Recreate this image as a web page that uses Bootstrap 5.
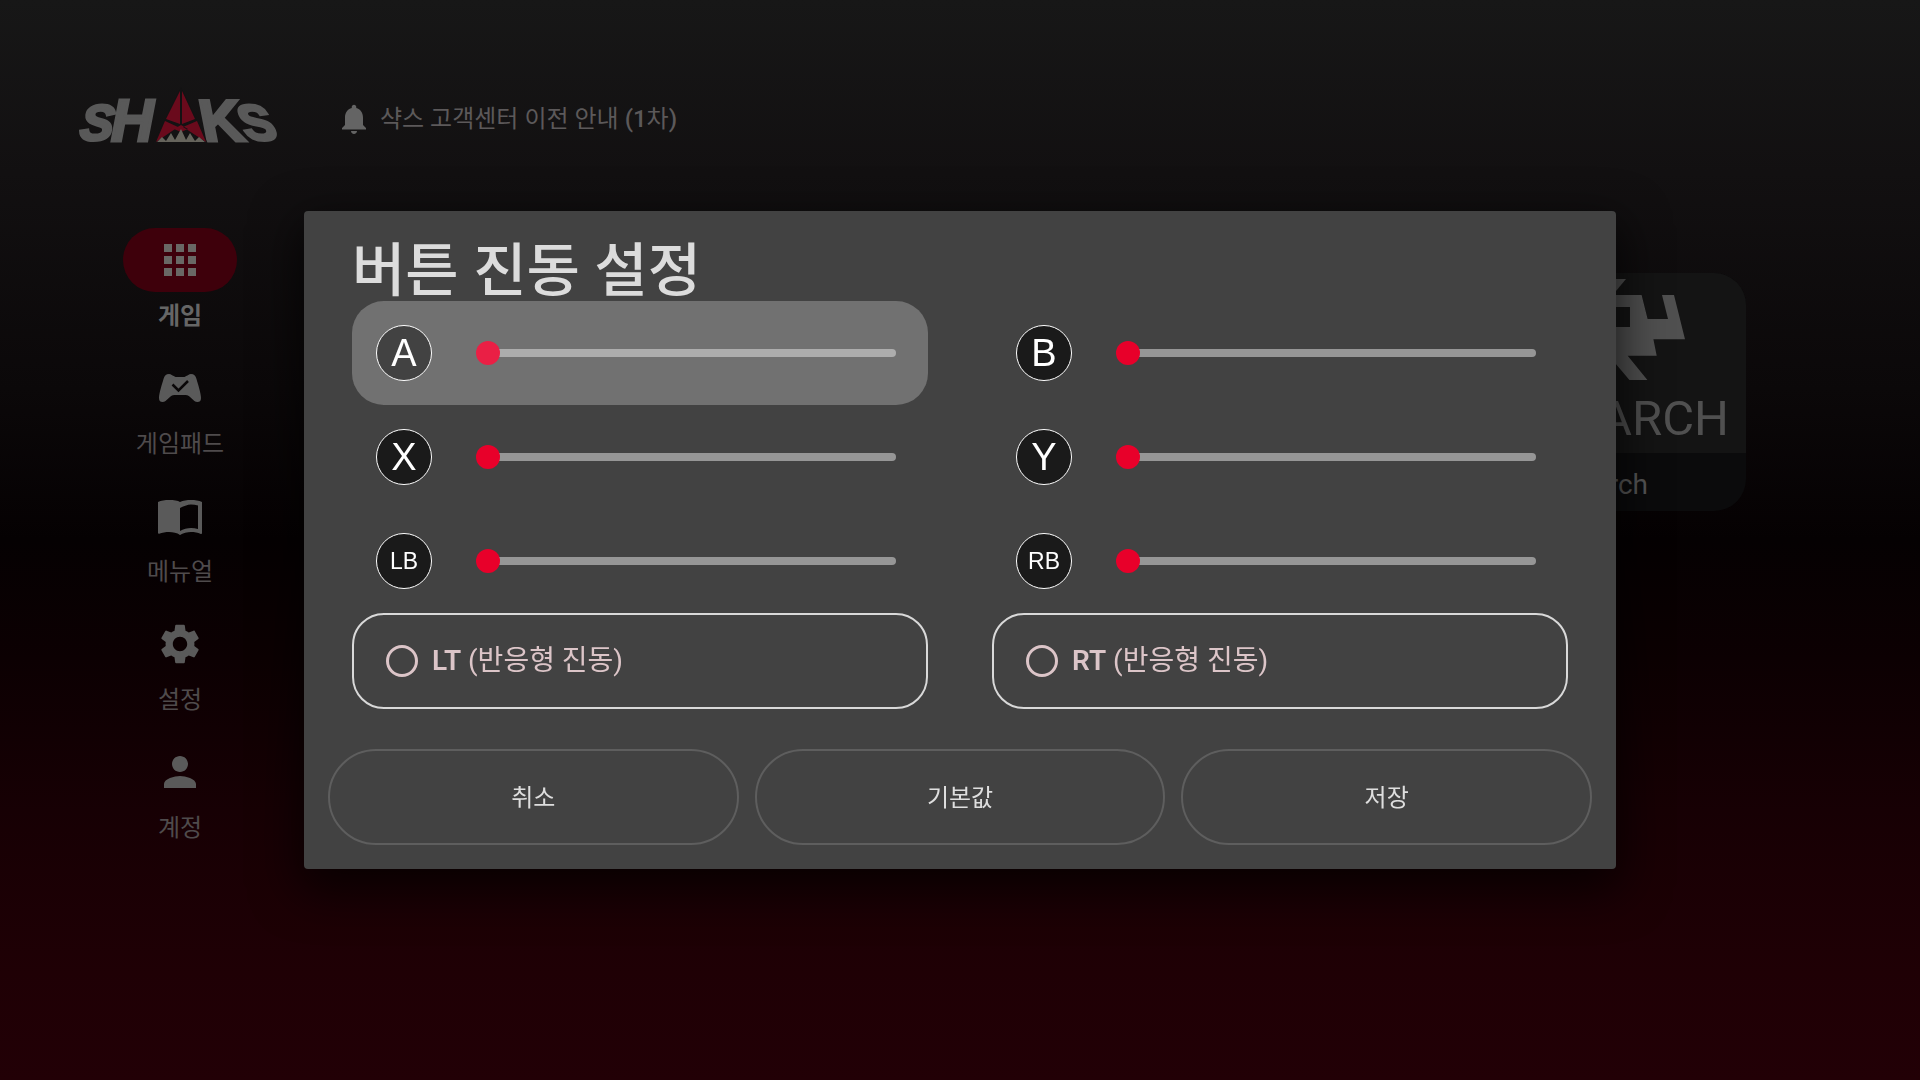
<!DOCTYPE html>
<html lang="ko">
<head>
<meta charset="utf-8">
<meta name="viewport" content="width=device-width, initial-scale=1">
<title>SHAKS - 버튼 진동 설정</title>
<link href="https://cdn.jsdelivr.net/npm/bootstrap@5.3.0/dist/css/bootstrap.min.css" rel="stylesheet">
<style>
  body {
    font-family: Roboto, "Noto Sans CJK KR", sans-serif;
    font-size: 24px;
    line-height: 32px;
    color: #5c595a;
    background: linear-gradient(#171717 0%, #121011 16%, #0b0809 36%, #050102 50%, #0c0002 61%, #170004 75%, #1f0005 90%, #220006 100%) no-repeat #220006;
  }
  .topbar { padding: 88px 80px 0; gap: 52px; height: 148px; }
  .notice { color: inherit; gap: 8px; padding-top: 2px; }
  .brand { overflow: visible; }
  .side { width: 200px; margin: 80px 0 0 80px; gap: 24px; }
  .side a { color: #4f4b4c; line-height: 32px; gap: 8px; }
  .side a.active { color: #666; font-weight: 700; }
  .pill { width: 114px; height: 64px; border-radius: 32px; color: #5a5a5a; }
  .active .pill { background: #3e000b; color: #696865; }
  .games { padding: 125px 174px 0 0; }
  .game { width: 320px; border-radius: 32px; background: #0b0b0c; color: #565656; }
  .game-name { font-size: 28px; line-height: 52px; padding-top: 6px; }
  .game-art { background: #141414; }
  .panel-dialog { max-width: 1312px; }
  .panel { background: #424242; border: 0; border-radius: 4px; color: #dcdcdc; box-shadow: 0 16px 48px 4px rgba(0, 0, 0, .7); }
  .panel-main { padding: 30px 48px 0; }
  .panel-title { font-size: 58px; line-height: 60px; font-weight: 500; }
  .pads { display: grid; grid-template-columns: 1fr 1fr; column-gap: 64px; }
  .pad { height: 104px; padding: 0 32px 0 24px; gap: 44px; border-radius: 32px; --track: #969696; --thumb: #e8002a; --face: #1a1a1a; }
  .pad.on { background: #717171; --track: #adadad; --thumb: #ea1f45; --face: #424242; }
  .face { width: 56px; height: 56px; border: 1px solid #fff; border-radius: 50%; background: var(--face); color: #fff; font-family: "Liberation Sans", sans-serif; font-size: 38px; line-height: 54px; flex: none; }
  .face.two { font-size: 23px; }
  .slide { appearance: none; background: transparent; height: 24px; margin: 0; min-width: 0; outline: 0; }
  .slide::-webkit-slider-runnable-track { height: 8px; border-radius: 4px; background: linear-gradient(var(--track), var(--track)) 12px 0 no-repeat; }
  .slide::-webkit-slider-thumb { appearance: none; width: 24px; height: 24px; margin-top: -8px; border-radius: 50%; background: var(--thumb); }
  .slide::-moz-range-track { height: 8px; border-radius: 4px; background: var(--track); }
  .slide::-moz-range-thumb { width: 24px; height: 24px; border: 0; background: var(--thumb); }
  .trigger { height: 96px; padding: 0 32px; gap: 14px; border: 2px solid #d9d9d9; border-radius: 32px; color: #dcc5c8; font-size: 28px; }
  .trigger strong { font-weight: 600; }
  .ring { appearance: none; width: 32px; height: 32px; border: 3px solid #dcc5c8; border-radius: 50%; margin: 0; }
  .ring:checked { background: #dcc5c8; }
  .panel-foot { padding: 40px 24px 24px; gap: 16px; }
  .panel-foot .btn { height: 96px; border: 2px solid #5e5e5e; border-radius: 48px; color: #dedede; font-size: 24px; padding: 2px 0 0; }
</style>
<script src="https://cdn.jsdelivr.net/npm/bootstrap@5.3.0/dist/js/bootstrap.bundle.min.js"></script>
</head>
<body class="min-vh-100">
<header class="topbar d-flex align-items-center">
  <svg class="brand" width="204" height="56" viewBox="0 0 204 56" role="img" aria-label="SHAKS">
    <g fill="#595959" stroke="#595959" stroke-width="3" font-family="Liberation Sans, sans-serif" font-weight="700">
      <text transform="translate(-1 50) skewX(-6)" font-size="50" font-style="italic">S</text>
      <text x="31" y="51" font-size="59" font-style="italic">H</text>
      <text transform="translate(124 51) skewX(11)" font-size="59">K</text>
      <text transform="translate(167 50) skewX(22)" font-size="50">S</text>
    </g>
    <path d="M101 -3 128 54 73 54Z" fill="#131213"/>
    <path d="M100 1 100 34 86 29ZM102 1 102 34 115 29ZM85 31 98 37 76 52ZM117 31 103 37 126 52ZM94 39 101 35 108 39 101 42Z" fill="#6a0a1c"/>
    <path d="M77 52 82 47 86 51 91 43 95 50 101 39 106 50 110 43 115 51 119 47 125 52Z" fill="#66645c"/>
  </svg>
  <a class="notice d-flex align-items-center text-decoration-none" href="#notice">
    <svg width="36" height="36" viewBox="0 0 24 24" fill="#646464" aria-hidden="true"><path d="M12 22c1.1 0 2-.9 2-2h-4c0 1.1.89 2 2 2zm6-6v-5c0-3.07-1.64-5.64-4.5-6.32V4c0-.83-.67-1.5-1.5-1.5s-1.5.67-1.5 1.5v.68C7.63 5.36 6 7.92 6 11v5l-2 2v1h16v-1l-2-2z"/></svg>
    <span>샥스 고객센터 이전 안내 <span class="fw-medium">(1</span>차<span class="fw-medium">)</span></span>
  </a>
</header>

<div class="d-flex">
  <nav class="side d-flex flex-column" aria-label="메뉴">
    <a class="active d-flex flex-column align-items-center text-decoration-none" href="#games" aria-current="page">
      <span class="pill d-flex align-items-center justify-content-center"><svg width="48" height="48" viewBox="0 0 24 24" fill="currentColor"><path d="M4 8h4V4H4v4zm6 12h4v-4h-4v4zm-6 0h4v-4H4v4zm0-6h4v-4H4v4zm6 0h4v-4h-4v4zm6-10v4h4V4h-4zm-6 4h4V4h-4v4zm6 6h4v-4h-4v4zm0 6h4v-4h-4v4z"/></svg></span>
      게임
    </a>
    <a class="d-flex flex-column align-items-center text-decoration-none" href="#gamepad">
      <span class="pill d-flex align-items-center justify-content-center"><svg width="48" height="48" viewBox="0 0 48 48"><path fill="currentColor" d="M13 10c2 0 4 2 6.500 3h9c2.500-1 4.500-3 6.500-3 3 0 4.500 1.500 5.500 5 1.500 5.500 4.500 14 4.500 19 0 3-1.500 4-3.500 4-4.500 0-7-7-12-7h-11c-5 0-7.500 7-12 7-2 0-3.500-1-3.500-4 0-5 3-13.500 4.500-19 1-3.500 2.500-5 5.500-5z"/><path d="M16.500 20.500 22.500 26.500 32 17" fill="none" stroke="#0a0708" stroke-width="2.500"/></svg></span>
      게임패드
    </a>
    <a class="d-flex flex-column align-items-center text-decoration-none" href="#manual">
      <span class="pill d-flex align-items-center justify-content-center"><svg width="48" height="48" viewBox="0 0 24 24" fill="currentColor"><path fill-rule="evenodd" d="M12 5C10.900 4.300 9 4 6.500 4 4.500 4 2.500 4.300 1 5v15.500c0 .3.300.5.600.4C3 20.300 5 20 6.500 20c2 0 4 .4 5.500 1.500 1.400-.9 3.800-1.500 5.500-1.500 1.700 0 3.400.3 4.900 1 .3.100.600-.1.600-.4V5c-1.500-.7-3.500-1-5.500-1-2 0-4 .3-5.500 1zm9 13.500c-1.100-.35-2.300-.5-3.500-.5-1.700 0-4 .65-5.500 1.500V8c1.500-.85 3.800-1.800 5.500-1.800 1.200 0 2.400.150 3.500.5z"/></svg></span>
      메뉴얼
    </a>
    <a class="d-flex flex-column align-items-center text-decoration-none" href="#settings">
      <span class="pill d-flex align-items-center justify-content-center"><svg width="48" height="48" viewBox="0 0 24 24" fill="currentColor"><path d="M19.140 12.940c.04-.3.060-.61.060-.94 0-.32-.02-.64-.07-.94l2.030-1.580c.18-.14.230-.41.120-.61l-1.920-3.320c-.12-.22-.37-.29-.59-.22l-2.390.96c-.5-.38-1.030-.7-1.620-.94l-.36-2.540c-.04-.24-.24-.41-.48-.41h-3.840c-.24 0-.43.170-.47.410l-.36 2.540c-.59.240-1.130.57-1.620.94l-2.390-.96c-.22-.08-.47 0-.59.220L2.740 8.870c-.12.210-.08.470.120.610l2.030 1.580c-.05.300-.09.630-.09.940s.020.640.070.940l-2.030 1.580c-.18.140-.23.410-.12.610l1.920 3.320c.12.220.37.290.59.220l2.390-.96c.5.380 1.030.7 1.620.94l.36 2.540c.05.240.24.410.48.410h3.840c.24 0 .44-.17.470-.41l.36-2.540c.59-.24 1.130-.56 1.620-.94l2.390.96c.22.080.47 0 .59-.22l1.920-3.320c.12-.22.070-.47-.12-.61l-2.010-1.580zM12 15.600c-1.980 0-3.600-1.620-3.600-3.600s1.620-3.600 3.600-3.600 3.600 1.620 3.600 3.600-1.620 3.600-3.600 3.600z"/></svg></span>
      설정
    </a>
    <a class="d-flex flex-column align-items-center text-decoration-none" href="#account">
      <span class="pill d-flex align-items-center justify-content-center"><svg width="48" height="48" viewBox="0 0 24 24" fill="currentColor"><path d="M12 12c2.210 0 4-1.790 4-4s-1.790-4-4-4-4 1.790-4 4 1.790 4 4 4zm0 2c-2.670 0-8 1.340-8 4v2h16v-2c0-2.660-5.330-4-8-4z"/></svg></span>
      계정
    </a>
  </nav>
  <main class="games flex-grow-1 d-flex justify-content-end align-items-start">
    <a class="game d-block overflow-hidden text-center text-decoration-none" href="#retroarch">
      <svg class="game-art d-block w-100" viewBox="0 0 320 180" role="img" aria-label="RetroArch">
        <g id="half" fill="#505050">
          <path d="M160 22h55.600l6 24h20.400l-6-24h12l11 44.300h-31.600l3.300 16.400h-29l19.700 24.300h-18l-22-26h-21.400zM184 34v20h20v-20z" fill-rule="evenodd"/>
          <path d="M200 6 185 24H173L190 6Z"/>
        </g>
        <use href="#half" transform="matrix(-1 0 0 1 320 0)"/>
        <text x="303" y="162" text-anchor="end" font-family="Roboto, sans-serif" font-weight="400" font-size="49" fill="#505050">RETROARCH</text>
      </svg>
      <div class="game-name">RetroArch</div>
    </a>
  </main>
</div>

<div class="modal d-block" role="dialog" aria-modal="true" aria-labelledby="panelTitle">
  <div class="modal-dialog modal-dialog-centered panel-dialog">
    <form class="modal-content panel">
      <div class="panel-main">
        <h1 class="panel-title mb-0" id="panelTitle">버튼 진동 설정</h1>
        <div class="pads">
          <div class="pad on d-flex align-items-center"><label class="face d-flex align-items-center justify-content-center" for="padA">A</label><input class="slide flex-grow-1" type="range" id="padA" value="0"></div>
          <div class="pad d-flex align-items-center"><label class="face d-flex align-items-center justify-content-center" for="padB">B</label><input class="slide flex-grow-1" type="range" id="padB" value="0"></div>
          <div class="pad d-flex align-items-center"><label class="face d-flex align-items-center justify-content-center" for="padX">X</label><input class="slide flex-grow-1" type="range" id="padX" value="0"></div>
          <div class="pad d-flex align-items-center"><label class="face d-flex align-items-center justify-content-center" for="padY">Y</label><input class="slide flex-grow-1" type="range" id="padY" value="0"></div>
          <div class="pad d-flex align-items-center"><label class="face two d-flex align-items-center justify-content-center" for="padLB">LB</label><input class="slide flex-grow-1" type="range" id="padLB" value="0"></div>
          <div class="pad d-flex align-items-center"><label class="face two d-flex align-items-center justify-content-center" for="padRB">RB</label><input class="slide flex-grow-1" type="range" id="padRB" value="0"></div>
          <div class="trigger d-flex align-items-center"><input class="ring" type="checkbox" id="trigL"><label for="trigL"><strong>LT</strong> (반응형 진동)</label></div>
          <div class="trigger d-flex align-items-center"><input class="ring" type="checkbox" id="trigR"><label for="trigR"><strong>RT</strong> (반응형 진동)</label></div>
        </div>
      </div>
      <div class="panel-foot d-flex">
        <button class="btn flex-fill w-100" type="button">취소</button>
        <button class="btn flex-fill w-100" type="button">기본값</button>
        <button class="btn flex-fill w-100" type="button">저장</button>
      </div>
    </form>
  </div>
</div>
</body>
</html>
